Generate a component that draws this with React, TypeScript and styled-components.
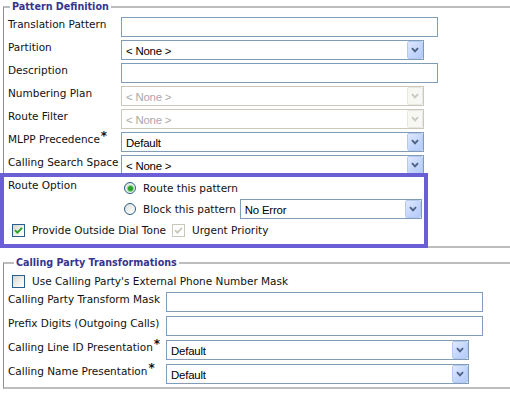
import React from 'react';
import styled, { createGlobalStyle } from 'styled-components';

const GlobalStyle = createGlobalStyle`
  html, body {
    margin: 0;
    padding: 0;
    background: #ffffff;
  }
  body {
    font-family: "DejaVu Sans", Verdana, sans-serif;
    font-size: 10.5px;
    color: #111111;
  }
`;

const Page = styled.div`
  width: 510px;
  height: 395px;
  overflow: hidden;
  box-sizing: border-box;
  padding: 1px 0 0 3px;
`;

const Fieldset = styled.fieldset<{ $padBottom: number }>`
  width: 540px;
  box-sizing: border-box;
  margin: 0;
  padding: 4px 0 ${({ $padBottom }) => $padBottom}px 4px;
  border: none;
  border-top: 2px solid #bdbdbd;
  border-left: 1px solid #8e8e8e;
  border-bottom: 2px solid #bdbdbd;

  & + & {
    margin-top: 9px;
  }
`;

const Legend = styled.legend<{ $offset: number }>`
  margin-left: ${({ $offset }) => $offset}px;
  padding: 0 2px;
  font-weight: bold;
  font-size: 9.6px;
  line-height: 12px;
  color: #35358f;
`;

const FormGrid = styled.div<{ $labelWidth: number; $gap: number }>`
  display: grid;
  grid-template-columns: ${({ $labelWidth }) => $labelWidth}px auto;
  grid-auto-rows: 20px;
  row-gap: ${({ $gap }) => $gap}px;
  align-items: start;
  justify-items: start;
`;

const Label = styled.div`
  padding-top: 2px;
  line-height: 10px;
  white-space: nowrap;
`;

const Req = styled.span`
  font-weight: bold;
  font-size: 12px;
  vertical-align: 3px;
  line-height: 0;
  margin-left: 1px;
`;

const TextBox = styled.div<{ $width: number }>`
  width: ${({ $width }) => $width}px;
  height: 20px;
  box-sizing: border-box;
  border: 1px solid #7f9db9;
  background: #ffffff;
`;

const SelectBox = styled.div<{ $width: number; $disabled?: boolean }>`
  display: flex;
  width: ${({ $width }) => $width}px;
  height: 20px;
  box-sizing: border-box;
  border: 1px solid ${({ $disabled }) => ($disabled ? '#cbc9bd' : '#7f9db9')};
  background: #ffffff;
  font-family: "Liberation Sans", Arial, sans-serif;
  font-size: 11.4px;
  color: ${({ $disabled }) => ($disabled ? '#a9a9a9' : '#000000')};
  flex-shrink: 0;
`;

const SelectValue = styled.span`
  flex: 1;
  padding: 1px 3px 0 4px;
  line-height: 18px;
  letter-spacing: -0.2px;
  white-space: nowrap;
  overflow: hidden;
`;

const DropButton = styled.span<{ $disabled?: boolean }>`
  width: 16px;
  margin: 0 0 0 1px;
  box-sizing: border-box;
  border: 1px solid ${({ $disabled }) => ($disabled ? '#e9e8e0' : '#b6c9f3')};
  border-radius: 2px;
  background: ${({ $disabled }) =>
    $disabled ? '#f7f7f3' : 'linear-gradient(135deg, #e0e9fe 0%, #c4d6fc 55%, #b5cbfa 100%)'};
  display: flex;
  align-items: center;
  justify-content: center;
`;

const Chevron = ({ disabled }: { disabled?: boolean }) => (
  <svg width="8" height="6" viewBox="0 0 8 6">
    <polyline
      points="1,1.2 4,4.3 7,1.2"
      fill="none"
      stroke={disabled ? '#c9c9c2' : '#4d6185'}
      strokeWidth="1.9"
    />
  </svg>
);

interface SelectProps {
  width: number;
  value: string;
  disabled?: boolean;
}

const Select: React.FC<SelectProps> = ({ width, value, disabled }) => (
  <SelectBox $width={width} $disabled={disabled}>
    <SelectValue>{value}</SelectValue>
    <DropButton $disabled={disabled}>
      <Chevron disabled={disabled} />
    </DropButton>
  </SelectBox>
);

// purple annotation frame drawn over the route options
const RouteBox = styled.div`
  width: 428px;
  box-sizing: border-box;
  margin: -2px 0 -2px -8px;
  padding: 1px 4px 3px 4px;
  border: 4px solid #6b5fd6;
  background: #ffffff;
  position: relative;
`;

const OptionGrid = styled.div`
  display: grid;
  grid-template-columns: 113px auto;
  align-items: start;
`;

const RadioGroup = styled.div`
  display: flex;
  flex-direction: column;
  gap: 1px;
`;

const RadioLine = styled.div`
  display: flex;
  align-items: center;
  height: 20px;
  white-space: nowrap;
`;

const Radio = styled.span<{ $checked?: boolean }>`
  width: 12px;
  height: 12px;
  box-sizing: border-box;
  margin: 0 7px 0 3px;
  border-radius: 50%;
  border: 1px solid #2a5f8c;
  background: linear-gradient(135deg, #dcdcd7 0%, #f4f4f1 60%, #ffffff 100%);
  display: flex;
  align-items: center;
  justify-content: center;
  flex-shrink: 0;

  &::after {
    content: '';
    display: ${({ $checked }) => ($checked ? 'block' : 'none')};
    width: 5px;
    height: 5px;
    border-radius: 50%;
    background: #2aa12a;
    box-shadow: 0 0 0 1px #8ad68a;
  }
`;

const CheckLine = styled.div<{ $height: number; $after?: number }>`
  display: flex;
  align-items: center;
  height: ${({ $height }) => $height}px;
  margin-bottom: ${({ $after }) => $after || 0}px;
  padding-left: 4px;
  white-space: nowrap;
`;

const Box = styled.span<{ $disabled?: boolean }>`
  width: 13px;
  height: 13px;
  box-sizing: border-box;
  margin-right: 7px;
  border: 1px solid ${({ $disabled }) => ($disabled ? '#cac8bb' : '#2a5f8c')};
  background: ${({ $disabled }) =>
    $disabled ? '#ffffff' : 'linear-gradient(135deg, #d6d6d0 0%, #f2f2ef 60%, #ffffff 100%)'};
  display: flex;
  align-items: center;
  justify-content: center;
  flex-shrink: 0;
`;

const CheckBox = ({ checked, disabled }: { checked?: boolean; disabled?: boolean }) => (
  <Box $disabled={disabled}>
    {checked && (
      <svg width="9" height="9" viewBox="0 0 9 9">
        <polyline
          points="1,4.2 3.4,6.6 8,1.8"
          fill="none"
          stroke={disabled ? '#cac8bb' : '#21a121'}
          strokeWidth="1.8"
        />
      </svg>
    )}
  </Box>
);

const CheckText = styled.span`
  margin-right: 6px;
`;

const BlockSelect = styled.div`
  margin-left: 4px;
`;

const App: React.FC = () => {
  return (
    <>
      <GlobalStyle />
      <Page>
        <Fieldset $padBottom={0}>
          <Legend $offset={2}>Pattern Definition</Legend>
          <FormGrid $labelWidth={113} $gap={3}>
            <Label>Translation Pattern</Label>
            <TextBox $width={317} />
            <Label>Partition</Label>
            <Select width={303} value="< None >" />
            <Label>Description</Label>
            <TextBox $width={317} />
            <Label>Numbering Plan</Label>
            <Select width={303} value="< None >" disabled />
            <Label>Route Filter</Label>
            <Select width={303} value="< None >" disabled />
            <Label>
              MLPP Precedence<Req>*</Req>
            </Label>
            <Select width={303} value="Default" />
            <Label>Calling Search Space</Label>
            <Select width={303} value="< None >" />
          </FormGrid>

          <RouteBox>
            <OptionGrid>
              <Label>Route Option</Label>
              <RadioGroup>
                <RadioLine>
                  <Radio $checked />
                  <span>Route this pattern</span>
                </RadioLine>
                <RadioLine>
                  <Radio />
                  <span>Block this pattern</span>
                  <BlockSelect>
                    <Select width={182} value="No Error" />
                  </BlockSelect>
                </RadioLine>
              </RadioGroup>
            </OptionGrid>
            <CheckLine $height={22}>
              <CheckBox checked />
              <CheckText>Provide Outside Dial Tone</CheckText>
              <CheckBox checked disabled />
              <CheckText>Urgent Priority</CheckText>
            </CheckLine>
          </RouteBox>
        </Fieldset>

        <Fieldset $padBottom={3}>
          <Legend $offset={6}>Calling Party Transformations</Legend>
          <CheckLine $height={16} $after={3}>
            <CheckBox />
            <CheckText>Use Calling Party's External Phone Number Mask</CheckText>
          </CheckLine>
          <FormGrid $labelWidth={158} $gap={4}>
            <Label>Calling Party Transform Mask</Label>
            <TextBox $width={317} />
            <Label>Prefix Digits (Outgoing Calls)</Label>
            <TextBox $width={317} />
            <Label>
              Calling Line ID Presentation<Req>*</Req>
            </Label>
            <Select width={303} value="Default" />
            <Label>
              Calling Name Presentation<Req>*</Req>
            </Label>
            <Select width={303} value="Default" />
          </FormGrid>
        </Fieldset>
      </Page>
    </>
  );
};

export default App;
